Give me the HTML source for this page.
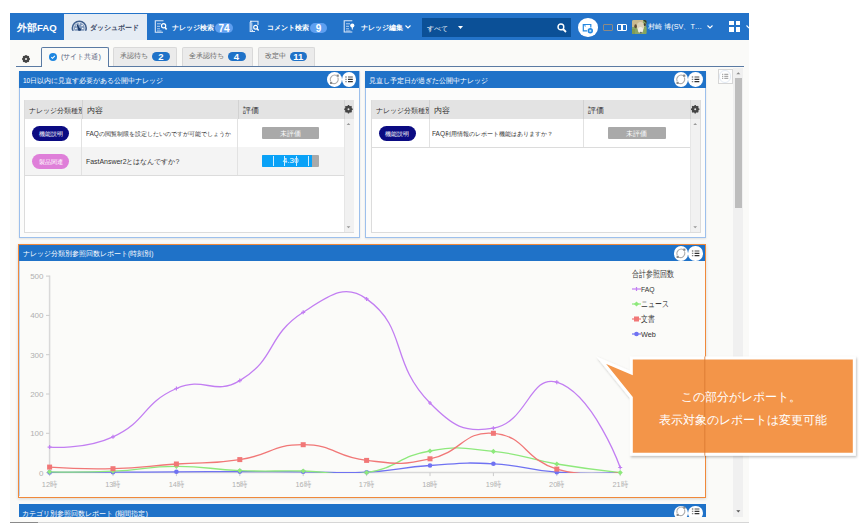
<!DOCTYPE html>
<html><head><meta charset="utf-8">
<style>
*{box-sizing:border-box}
html,body{margin:0;padding:0}
body{width:865px;height:529px;position:relative;overflow:hidden;background:#fff;font-family:"Liberation Sans",sans-serif;color:#333}
.a{position:absolute}
#app{left:10px;top:13px;width:739px;height:509.5px;background:#fafaf8;overflow:hidden}
#nav{left:10px;top:13px;width:739px;height:26.5px;background:#2373c9}
.nt{color:#fff;font-size:8.75px;font-weight:bold;white-space:nowrap;line-height:12px}
.badge{background:#5e9ff0;color:#fff;border-radius:6px;font-size:10px;font-weight:bold;text-align:center;line-height:11px}
.tab{border:1px solid #d9d9d9;border-bottom:none;background:#ebebeb;border-radius:2px 2px 0 0}
.tt{font-size:9px;color:#666;white-space:nowrap;line-height:11px}
.tb{background:#1f72c8;color:#fff;border-radius:5px;font-size:9.5px;font-weight:bold;text-align:center;line-height:9px}
.panel{border:1.5px solid #9dc0ec;background:#fcfcfb;box-shadow:0 1px 2px rgba(0,0,0,.1)}
.ph{background:#1f72c8;color:#fff;font-size:9.15px;line-height:18px;white-space:nowrap;padding-left:4px}
.circ{width:14.5px;height:14.8px;border-radius:50%;background:#fff}
.th{background:#e3e3e3;font-size:8px;color:#333;line-height:21px;white-space:nowrap;overflow:hidden}
.td{font-size:7.6px;color:#333;white-space:nowrap;overflow:hidden}
.pill{border-radius:8px;color:#fff;font-size:7.8px;text-align:center;line-height:15px}
.rbar{background:#a9a9a9;color:#fff;font-size:9px;text-align:center;line-height:12.5px}
</style></head><body>
<div id="app" class="a"></div>
<div id="nav" class="a"></div>
<!-- brand -->
<div class="a nt" style="left:17px;top:21px;font-size:10.5px;line-height:13px"><span class="f" style="--w:39.7px">外部FAQ</span></div>
<!-- active tab -->
<div class="a" style="left:64px;top:14px;width:82.5px;height:25.5px;background:#e5ecf4"></div>
<svg class="a" style="left:71px;top:20px" width="17" height="12" viewBox="0 0 17 12">
 <defs><clipPath id="gc"><rect x="0" y="0" width="17" height="10.7"/></clipPath></defs>
 <g clip-path="url(#gc)">
 <circle cx="8.3" cy="8.1" r="6.9" fill="none" stroke="#3f5f8e" stroke-width="1.6"/>
 <circle cx="8.3" cy="8.1" r="5.4" fill="#7f98bb"/>
 <path d="M4.2,8.6 L5.6,8.3 M4.9,5 L6.1,5.9 M8.3,3.2 V4.6 M11.7,5 L10.5,5.9 M12.4,8.6 L11,8.3" stroke="#fff" stroke-width="1.2"/>
 <path d="M8.6,10 L6.2,4.8" stroke="#1b3a6b" stroke-width="1.5"/>
 <circle cx="8.5" cy="9.6" r="1.5" fill="#1b3a6b"/>
 </g>
</svg>
<div class="a nt" style="left:90px;top:21px;color:#3d4a66"><span class="f" style="--w:48.5px">ダッシュボード</span></div>
<!-- knowledge search -->
<svg class="a" style="left:154px;top:19.5px" width="14" height="13" viewBox="0 0 14 13">
 <path d="M9.5,.8 H1.3 V12.2 H9" fill="none" stroke="#dbe8f8" stroke-width="1.1"/>
 <path d="M3,3.8 h4 M3,6.3 h3 M3,8.8 h3 M3,11 h4.5" stroke="#b6d0f0" stroke-width="1"/>
 <circle cx="9.6" cy="5.7" r="2.1" fill="none" stroke="#fff" stroke-width="1.2"/>
 <path d="M11,7.3 L12.6,9.4" stroke="#fff" stroke-width="1.6"/>
</svg>
<div class="a nt" style="left:172px;top:21px"><span class="f" style="--w:41.4px">ナレッジ検索</span></div>
<div class="a badge" style="left:215px;top:22.5px;width:18px;height:10.5px">74</div>
<!-- comment search -->
<svg class="a" style="left:249px;top:19.5px" width="12" height="13" viewBox="0 0 12 13">
 <path d="M3,1.2 H9 V5 M1.2,2 V11.5 H6" fill="none" stroke="#dbe8f8" stroke-width="1.1"/>
 <path d="M2.8,2.6 V10.5 H4" fill="none" stroke="#dbe8f8" stroke-width="1"/>
 <circle cx="2" cy="1.5" r=".9" fill="#fff"/>
 <circle cx="6.6" cy="7.2" r="1.9" fill="none" stroke="#fff" stroke-width="1.2"/>
 <path d="M8,8.6 L9.6,10.4" stroke="#fff" stroke-width="1.5"/>
</svg>
<div class="a nt" style="left:266.5px;top:21px"><span class="f" style="--w:41.2px">コメント検索</span></div>
<div class="a badge" style="left:310px;top:22.5px;width:17px;height:10.5px">9</div>
<!-- knowledge edit -->
<svg class="a" style="left:343px;top:19.5px" width="14" height="13" viewBox="0 0 14 13">
 <path d="M9.3,.8 H1.2 V12 H9.3" fill="none" stroke="#dbe8f8" stroke-width="1.1"/>
 <path d="M3,3.8 h4 M3,6.3 h3 M3,8.8 h3 M3,11 h4.5" stroke="#b6d0f0" stroke-width="1"/>
 <circle cx="9.3" cy="5.6" r="2.1" fill="#fff"/>
 <path d="M9.3,6.5 V9.5" stroke="#fff" stroke-width="1"/>
</svg>
<div class="a nt" style="left:360.5px;top:21px"><span class="f" style="--w:41.6px">ナレッジ編集</span></div>
<svg class="a" style="left:405px;top:25px" width="6" height="4" viewBox="0 0 6 4"><path d="M.5,.5 L3,3 L5.5,.5" fill="none" stroke="#fff" stroke-width="1.1"/></svg>
<!-- search box -->
<div class="a" style="left:422px;top:18px;width:149px;height:19px;background:#0b5097"></div>
<div class="a nt" style="left:427px;top:22px;font-weight:normal;font-size:8.75px"><span class="f" style="--w:19.8px">すべて</span></div>
<svg class="a" style="left:458px;top:26px" width="5" height="3" viewBox="0 0 5 3"><path d="M0,0 H5 L2.5,3Z" fill="#fff"/></svg>
<svg class="a" style="left:557px;top:22.5px" width="10" height="10" viewBox="0 0 10 10">
 <circle cx="3.9" cy="3.9" r="2.9" fill="none" stroke="#fff" stroke-width="1.4"/>
 <path d="M6,6 L9,9" stroke="#fff" stroke-width="1.8"/>
</svg>
<!-- round button -->
<div class="a" style="left:578px;top:18px;width:19.5px;height:18.5px;border-radius:50%;background:#fff"></div>
<svg class="a" style="left:582px;top:22.5px" width="12" height="11" viewBox="0 0 12 11">
 <path d="M5,7.8 H1.3 V1.5 H8.8 V4.5" fill="none" stroke="#2388e2" stroke-width="1.2"/>
 <path d="M2.3,2.6 h1 v1" fill="none" stroke="#2388e2" stroke-width=".8"/>
 <circle cx="8.3" cy="7.8" r="2.7" fill="#2388e2"/><rect x="7.3" y="6.8" width="2" height="2" fill="#bfe0fb"/>
</svg>
<!-- window icons -->
<div class="a" style="left:603px;top:24px;width:9.7px;height:7px;border:1.2px solid #8e8a82;border-radius:1px"></div>
<div class="a" style="left:617px;top:24px;width:10.2px;height:7px;border:1.4px solid #fff;border-radius:1px"></div>
<div class="a" style="left:621.4px;top:24px;width:1.4px;height:7px;background:#fff"></div>
<!-- avatar -->
<svg class="a" style="left:632.4px;top:19.7px" width="14.5" height="14.3" viewBox="0 0 14.5 14.3">
 <defs><clipPath id="av"><rect width="14.5" height="14.3" rx="1.6"/></clipPath><filter id="bl"><feGaussianBlur stdDeviation=".5"/></filter></defs>
 <g clip-path="url(#av)"><rect width="14.5" height="14.3" fill="#8aa566"/>
 <g filter="url(#bl)">
 <rect x="-1" y="-1" width="12" height="8" fill="#c9b98f"/>
 <path d="M10,-1 H16 V5 Z" fill="#2e3b2a"/>
 <ellipse cx="8.5" cy="6.5" rx="3.8" ry="4.5" fill="#ddd3b8"/>
 <ellipse cx="8.5" cy="10" rx="2.6" ry="3" fill="#f1eee6"/>
 <ellipse cx="3.6" cy="6.2" rx="1.3" ry="2" fill="#5d4c36"/>
 <ellipse cx="12.8" cy="4.5" rx="1" ry="1.6" fill="#4a3f33"/>
 <ellipse cx="8.8" cy="12.6" rx="1.2" ry=".8" fill="#6b6b66"/>
 <rect x="-1" y="9" width="4" height="6" fill="#7f9c52"/>
 <rect x="12" y="7" width="4" height="8" fill="#86a65a"/>
 </g></g>
</svg>
<div class="a nt" style="left:648.3px;top:21px;font-weight:normal;font-size:7.6px"><span class="f" style="--w:53.7px">村崎 博(SV、T…</span></div>
<svg class="a" style="left:707px;top:25px" width="6" height="4" viewBox="0 0 6 4"><path d="M.5,.5 L3,3 L5.5,.5" fill="none" stroke="#fff" stroke-width="1.1"/></svg>
<!-- grid -->
<div class="a" style="left:729px;top:20.7px;width:4.5px;height:4.5px;background:#fff"></div>
<div class="a" style="left:735.7px;top:20.7px;width:4.5px;height:4.5px;background:#fff"></div>
<div class="a" style="left:729px;top:27.2px;width:4.5px;height:4.5px;background:#fff"></div>
<div class="a" style="left:735.7px;top:27.2px;width:4.5px;height:4.5px;background:#fff"></div>
<svg class="a" style="left:746px;top:25px" width="3" height="4" viewBox="0 0 3 4"><path d="M.5,.5 L3,3" fill="none" stroke="#fff" stroke-width="1.1"/></svg>

<!-- tabs row -->
<svg class="a" style="left:21.5px;top:54.5px" width="8" height="8" viewBox="0 0 8 8">
 <circle cx="4" cy="4" r="2.6" fill="none" stroke="#444" stroke-width="1.6"/>
 <path d="M4,0 V8 M0,4 H8 M1.2,1.2 L6.8,6.8 M6.8,1.2 L1.2,6.8" stroke="#444" stroke-width="1.3"/>
 <circle cx="4" cy="4" r="1" fill="#fafaf8"/>
</svg>
<div class="a" style="left:16px;top:66px;width:727.5px;height:1.3px;background:#5a7aa3"></div>
<div class="a" style="left:41px;top:47px;width:68px;height:20.3px;border:1.2px solid #5a7aa3;border-bottom:none;background:#fafaf8;border-radius:2px 2px 0 0"></div>
<div class="a" style="left:49px;top:52.5px;width:8px;height:8px;border-radius:50%;background:#1d86e0"></div>
<svg class="a" style="left:49px;top:52.5px" width="8" height="8" viewBox="0 0 8 8"><path d="M2.3,4.2 L3.5,5.3 L5.8,2.8" fill="none" stroke="#fff" stroke-width="1.1"/></svg>
<div class="a tt" style="left:61px;top:51px;color:#5d6985"><span class="f" style="--w:40.9px">(サイト共通)</span></div>

<div class="a tab" style="left:113px;top:47px;width:64px;height:19px"></div>
<div class="a tt" style="left:120px;top:50px"><span class="f" style="--w:27.7px">承認待ち</span></div>
<div class="a tb" style="left:152px;top:51.5px;width:18px;height:9px">2</div>
<div class="a tab" style="left:182px;top:47px;width:71px;height:19px"></div>
<div class="a tt" style="left:189px;top:50px"><span class="f" style="--w:34.5px">全承認待ち</span></div>
<div class="a tb" style="left:227.5px;top:51.5px;width:18px;height:9px">4</div>
<div class="a tab" style="left:258px;top:47px;width:57px;height:19px"></div>
<div class="a tt" style="left:265px;top:50px"><span class="f" style="--w:20.5px">改定中</span></div>
<div class="a tb" style="left:289.5px;top:51.5px;width:17.5px;height:9px">11</div>

<!-- panel 1 -->
<div class="a panel" style="left:18.5px;top:71px;width:341.5px;height:167px"></div>
<div class="a ph" style="left:19px;top:71px;width:340px;height:16.8px"><span class="f" style="--w:139.6px">10日以内に見直す必要がある公開中ナレッジ</span></div>
<div class="a circ" style="left:327px;top:71.9px"></div>
<div class="a circ" style="left:341.7px;top:71.9px"></div>

<!-- table 1 -->
<div class="a" style="left:24px;top:100px;width:330px;height:132.5px;border:1px solid #dcdcdc;background:#fff"></div>
<div class="a th" style="left:25px;top:100.2px;width:57px;height:18.5px;padding-left:4px"><span class="f" style="--w:52px">ナレッジ分類種別</span></div>
<div class="a th" style="left:82px;top:100.2px;width:156px;height:18.5px;padding-left:4px;border-left:1px solid #d2d2d2">内容</div>
<div class="a th" style="left:237.5px;top:100.2px;width:106px;height:18.5px;padding-left:4px;border-left:1px solid #d2d2d2">評価</div>
<div class="a th" style="left:343.5px;top:100.2px;width:10px;height:18.5px;border-left:1px solid #d2d2d2"></div>
<div class="a" style="left:25px;top:146.8px;width:318.5px;height:28.5px;background:#f4f4f4"></div>
<div class="a" style="left:25px;top:175px;width:318.5px;height:1px;background:#dcdcdc"></div>
<div class="a" style="left:81px;top:118.7px;width:1px;height:56.5px;background:#e2e2e2"></div>
<div class="a" style="left:237px;top:118.7px;width:1px;height:56.5px;background:#e2e2e2"></div>
<div class="a" style="left:343.5px;top:118.7px;width:10px;height:113px;background:#f1f1f1;border-left:1px solid #e6e6e6"></div>
<div class="a pill" style="left:32.2px;top:125.5px;width:37px;height:15.2px;background:#0b0b82"><span class="f" style="--w:25px">機能説明</span></div>
<div class="a pill" style="left:32.2px;top:153.8px;width:37px;height:15px;background:#df7fd9"><span class="f" style="--w:25px">製品関連</span></div>
<div class="a td" style="left:86px;top:129px;width:151px"><span class="f" style="--w:151px">FAQの閲覧制限を設定したいのですが可能でしょうか</span></div>
<div class="a td" style="left:86px;top:157px;width:150px"><span class="f" style="--w:93.3px">FastAnswer2とはなんですか?</span></div>
<div class="a rbar" style="left:261.6px;top:126.7px;width:57.7px;height:12.3px;border-radius:1px"><span class="f" style="--w:21.8px">未評価</span></div>
<div class="a" style="left:261.6px;top:154.6px;width:57.7px;height:12.5px;background:#a9a9a9;border-radius:1px"></div>
<div class="a rbar" style="left:261.6px;top:154.6px;width:50px;height:12.5px;background:#0aa2f7;border-radius:1px 0 0 1px;padding-left:8px;font-size:8px">4.30</div>
<div class="a" style="left:272.5px;top:156px;width:1px;height:9.5px;background:#cfeeff"></div>
<div class="a" style="left:284px;top:156px;width:1px;height:9.5px;background:#cfeeff"></div>
<div class="a" style="left:296px;top:156px;width:1px;height:9.5px;background:#cfeeff"></div>
<div class="a" style="left:307.5px;top:156px;width:1px;height:9.5px;background:#cfeeff"></div>


<!-- panel 2 -->
<div class="a panel" style="left:364.5px;top:71px;width:341.5px;height:167px"></div>
<div class="a ph" style="left:365px;top:71px;width:340.5px;height:16.8px"><span class="f" style="--w:117.3px">見直し予定日が過ぎた公開中ナレッジ</span></div>
<div class="a circ" style="left:673.5px;top:71.9px"></div>
<div class="a circ" style="left:688.2px;top:71.9px"></div>
<div class="a" style="left:370.5px;top:100px;width:330.5px;height:132.5px;border:1px solid #dcdcdc;background:#fff"></div>
<div class="a th" style="left:371.5px;top:100.2px;width:57.5px;height:18.5px;padding-left:4px"><span class="f" style="--w:52px">ナレッジ分類種別</span></div>
<div class="a th" style="left:429px;top:100.2px;width:155px;height:18.5px;padding-left:4px;border-left:1px solid #d2d2d2">内容</div>
<div class="a th" style="left:583.2px;top:100.2px;width:107px;height:18.5px;padding-left:4px;border-left:1px solid #d2d2d2">評価</div>
<div class="a th" style="left:690.2px;top:100.2px;width:10px;height:18.5px;border-left:1px solid #d2d2d2"></div>
<div class="a" style="left:371.5px;top:147px;width:319px;height:1px;background:#dcdcdc"></div>
<div class="a" style="left:428.5px;top:118.7px;width:1px;height:28.3px;background:#e2e2e2"></div>
<div class="a" style="left:583px;top:118.7px;width:1px;height:28.3px;background:#e2e2e2"></div>
<div class="a" style="left:690.2px;top:118.7px;width:10px;height:113px;background:#f1f1f1;border-left:1px solid #e6e6e6"></div>
<div class="a pill" style="left:379px;top:125.5px;width:36.5px;height:15.2px;background:#0b0b82"><span class="f" style="--w:25px">機能説明</span></div>
<div class="a td" style="left:432px;top:129px;width:150px"><span class="f" style="--w:126.4px">FAQ利用情報のレポート機能はありますか？</span></div>
<div class="a rbar" style="left:608px;top:126.7px;width:57.7px;height:12.3px;border-radius:1px"><span class="f" style="--w:21.8px">未評価</span></div>

<!-- right side -->
<div class="a" style="left:717.8px;top:69.1px;width:14.8px;height:14.6px;border:1px solid #d6d6d6;background:#fdfdfd"></div>
<div class="a" style="left:719px;top:70.2px;width:12.4px;height:12.4px;border-radius:50%;border:1px solid #e3ebf5;background:#fff"></div>
<svg class="a" style="left:0;top:0" width="865" height="100">
 <path d="M722.2,74.4 h1 M722.2,76.4 h1 M722.2,78.4 h1" stroke="#999" stroke-width="1.1"/>
 <path d="M724.3,74.4 h4 M724.3,76.4 h4 M724.3,78.4 h4" stroke="#aaa" stroke-width="1.1"/>
</svg>
<div class="a" style="left:733.2px;top:68px;width:9.8px;height:448.5px;background:#f0f0f0"></div>
<div class="a" style="left:734.8px;top:77.9px;width:7.2px;height:130.2px;background:#bdbdbd"></div>
<svg class="a" style="left:0;top:0" width="865" height="529">
 <path d="M736.3,74.2 L738.3,72.2 L740.3,74.2Z" fill="#888"/>
 <path d="M736.3,510.3 L738.3,512.5 L740.3,510.3Z" fill="#555"/>
</svg>

<!-- chart panel -->
<div class="a" style="left:18px;top:244px;width:688px;height:253.5px;background:#fbfbf9;box-shadow:0 1px 3px rgba(0,0,0,.15)"></div>
<div class="a" style="left:19.4px;top:261px;width:1px;height:235px;background:#b9d3f1"></div>
<div class="a ph" style="left:19px;top:245px;width:686px;height:15.8px;line-height:17px"><span class="f" style="--w:130.4px">ナレッジ分類別参照回数レポート(時刻別)</span></div>
<div class="a circ" style="left:673.5px;top:246px;width:14.5px;height:14.5px"></div>
<div class="a circ" style="left:688px;top:246px;width:14.5px;height:14.5px"></div>
<div class="a" style="left:18px;top:244px;width:688px;height:253.5px;border:1.5px solid #f0893b"></div>
<svg class="a" style="left:0;top:0" width="865" height="529">
<path d="M49.6,275.5 V472.6 H620.5" fill="none" stroke="#d9d9d9" stroke-width="1.5"/><path d="M46,472.6 H49.6" stroke="#ccc" stroke-width="1"/><text x="43.5" y="475.6" text-anchor="end" font-size="8" fill="#b0b0b0">0</text><path d="M46,433.3 H49.6" stroke="#ccc" stroke-width="1"/><text x="43.5" y="436.3" text-anchor="end" font-size="8" fill="#b0b0b0">100</text><path d="M46,394.0 H49.6" stroke="#ccc" stroke-width="1"/><text x="43.5" y="397.0" text-anchor="end" font-size="8" fill="#b0b0b0">200</text><path d="M46,354.7 H49.6" stroke="#ccc" stroke-width="1"/><text x="43.5" y="357.7" text-anchor="end" font-size="8" fill="#b0b0b0">300</text><path d="M46,315.4 H49.6" stroke="#ccc" stroke-width="1"/><text x="43.5" y="318.4" text-anchor="end" font-size="8" fill="#b0b0b0">400</text><path d="M46,276.1 H49.6" stroke="#ccc" stroke-width="1"/><text x="43.5" y="279.1" text-anchor="end" font-size="8" fill="#b0b0b0">500</text><path d="M49.6,472.6 V476.1" stroke="#ccc" stroke-width="1"/><text x="49.6" y="486.6" text-anchor="middle" font-size="8" fill="#b0b0b0" textLength="15.5" lengthAdjust="spacingAndGlyphs">12時</text><path d="M113.0,472.6 V476.1" stroke="#ccc" stroke-width="1"/><text x="113.0" y="486.6" text-anchor="middle" font-size="8" fill="#b0b0b0" textLength="15.5" lengthAdjust="spacingAndGlyphs">13時</text><path d="M176.4,472.6 V476.1" stroke="#ccc" stroke-width="1"/><text x="176.4" y="486.6" text-anchor="middle" font-size="8" fill="#b0b0b0" textLength="15.5" lengthAdjust="spacingAndGlyphs">14時</text><path d="M239.8,472.6 V476.1" stroke="#ccc" stroke-width="1"/><text x="239.8" y="486.6" text-anchor="middle" font-size="8" fill="#b0b0b0" textLength="15.5" lengthAdjust="spacingAndGlyphs">15時</text><path d="M303.2,472.6 V476.1" stroke="#ccc" stroke-width="1"/><text x="303.2" y="486.6" text-anchor="middle" font-size="8" fill="#b0b0b0" textLength="15.5" lengthAdjust="spacingAndGlyphs">16時</text><path d="M366.6,472.6 V476.1" stroke="#ccc" stroke-width="1"/><text x="366.6" y="486.6" text-anchor="middle" font-size="8" fill="#b0b0b0" textLength="15.5" lengthAdjust="spacingAndGlyphs">17時</text><path d="M430.0,472.6 V476.1" stroke="#ccc" stroke-width="1"/><text x="430.0" y="486.6" text-anchor="middle" font-size="8" fill="#b0b0b0" textLength="15.5" lengthAdjust="spacingAndGlyphs">18時</text><path d="M493.4,472.6 V476.1" stroke="#ccc" stroke-width="1"/><text x="493.4" y="486.6" text-anchor="middle" font-size="8" fill="#b0b0b0" textLength="15.5" lengthAdjust="spacingAndGlyphs">19時</text><path d="M556.8,472.6 V476.1" stroke="#ccc" stroke-width="1"/><text x="556.8" y="486.6" text-anchor="middle" font-size="8" fill="#b0b0b0" textLength="15.5" lengthAdjust="spacingAndGlyphs">20時</text><path d="M620.2,472.6 V476.1" stroke="#ccc" stroke-width="1"/><text x="620.2" y="486.6" text-anchor="middle" font-size="8" fill="#b0b0b0" textLength="15.5" lengthAdjust="spacingAndGlyphs">21時</text><clipPath id="cp"><rect x="40" y="260" width="600" height="213.10000000000002"/></clipPath><g clip-path="url(#cp)" fill="none" stroke-width="1.3"><path d="M49.6,472.4 C49.6,472.4 81.3,472.4 113.0,472.2 C144.7,472.1 144.7,472.0 176.4,471.8 C208.1,471.7 208.1,471.6 239.8,471.6 C271.5,471.6 271.5,471.7 303.2,471.8 C334.9,472.0 335.0,473.8 366.6,472.2 C398.4,470.6 398.2,467.6 430.0,465.5 C461.6,463.4 461.8,462.1 493.4,463.8 C525.2,465.4 525.0,470.0 556.8,472.2 C588.4,474.4 620.2,472.6 620.2,472.6" stroke="#6f72f2"/><path d="M49.6,471.8 C49.6,471.8 81.3,472.6 113.0,471.2 C144.7,469.8 144.7,466.4 176.4,466.3 C208.1,466.2 208.1,469.5 239.8,470.6 C271.5,471.8 271.5,470.5 303.2,471.0 C334.9,471.5 335.8,477.5 366.6,472.6 C399.2,467.5 397.4,456.4 430.0,451.0 C460.8,445.8 462.0,448.2 493.4,451.4 C525.4,454.7 524.9,458.6 556.8,464.0 C588.3,469.2 620.2,472.6 620.2,472.6" stroke="#8ee97c"/><path d="M49.6,467.1 C49.6,467.1 81.3,469.5 113.0,468.7 C144.7,467.9 144.7,466.2 176.4,464.0 C208.1,461.7 208.5,464.4 239.8,459.6 C271.9,454.8 271.5,444.5 303.2,444.7 C334.9,444.9 334.4,456.8 366.6,460.4 C397.8,463.9 399.5,465.4 430.0,458.8 C462.9,451.8 462.7,430.8 493.4,433.3 C526.1,435.9 522.9,458.6 556.8,469.1 C586.3,478.2 620.2,472.6 620.2,472.6" stroke="#f17777"/><path d="M49.6,447.1 C49.6,447.1 84.7,449.9 113.0,436.8 C148.1,420.6 141.2,404.1 176.4,388.5 C204.6,376.0 214.0,396.1 239.8,380.6 C277.4,358.0 265.8,336.4 303.2,312.3 C329.2,295.5 344.6,283.1 366.6,298.9 C408.0,328.5 389.3,361.6 430.0,403.0 C452.7,426.2 463.9,433.0 493.4,428.2 C527.3,422.6 529.9,373.9 556.8,382.2 C593.3,393.5 620.2,467.5 620.2,467.5" stroke="#c27ef2"/></g><circle cx="49.6" cy="472.4" r="2.3" fill="#6f72f2"/><circle cx="113.0" cy="472.2" r="2.3" fill="#6f72f2"/><circle cx="176.4" cy="471.8" r="2.3" fill="#6f72f2"/><circle cx="239.8" cy="471.6" r="2.3" fill="#6f72f2"/><circle cx="303.2" cy="471.8" r="2.3" fill="#6f72f2"/><circle cx="366.6" cy="472.2" r="2.3" fill="#6f72f2"/><circle cx="430.0" cy="465.5" r="2.3" fill="#6f72f2"/><circle cx="493.4" cy="463.8" r="2.3" fill="#6f72f2"/><circle cx="556.8" cy="472.2" r="2.3" fill="#6f72f2"/><path d="M49.6,469.2 L52.2,471.8 L49.6,474.4 L47.0,471.8Z" fill="#8ee97c"/><path d="M113.0,468.6 L115.6,471.2 L113.0,473.8 L110.4,471.2Z" fill="#8ee97c"/><path d="M176.4,463.7 L179.0,466.3 L176.4,468.9 L173.8,466.3Z" fill="#8ee97c"/><path d="M239.8,468.0 L242.4,470.6 L239.8,473.2 L237.2,470.6Z" fill="#8ee97c"/><path d="M303.2,468.4 L305.8,471.0 L303.2,473.6 L300.6,471.0Z" fill="#8ee97c"/><path d="M366.6,470.0 L369.2,472.6 L366.6,475.2 L364.0,472.6Z" fill="#8ee97c"/><path d="M430.0,448.4 L432.6,451.0 L430.0,453.6 L427.4,451.0Z" fill="#8ee97c"/><path d="M493.4,448.8 L496.0,451.4 L493.4,454.0 L490.8,451.4Z" fill="#8ee97c"/><path d="M556.8,461.4 L559.4,464.0 L556.8,466.6 L554.2,464.0Z" fill="#8ee97c"/><path d="M620.2,470.0 L622.8,472.6 L620.2,475.2 L617.6,472.6Z" fill="#8ee97c"/><rect x="47.1" y="464.6" width="5" height="5" fill="#f17777"/><rect x="110.5" y="466.2" width="5" height="5" fill="#f17777"/><rect x="173.9" y="461.5" width="5" height="5" fill="#f17777"/><rect x="237.3" y="457.1" width="5" height="5" fill="#f17777"/><rect x="300.7" y="442.2" width="5" height="5" fill="#f17777"/><rect x="364.1" y="457.9" width="5" height="5" fill="#f17777"/><rect x="427.5" y="456.3" width="5" height="5" fill="#f17777"/><rect x="490.9" y="430.8" width="5" height="5" fill="#f17777"/><rect x="554.3" y="466.6" width="5" height="5" fill="#f17777"/><path d="M47.6,447.1 H51.6 M49.6,445.1 V449.1" stroke="#c27ef2" stroke-width="1.2"/><path d="M111.0,436.8 H115.0 M113.0,434.8 V438.8" stroke="#c27ef2" stroke-width="1.2"/><path d="M174.4,388.5 H178.4 M176.4,386.5 V390.5" stroke="#c27ef2" stroke-width="1.2"/><path d="M237.8,380.6 H241.8 M239.8,378.6 V382.6" stroke="#c27ef2" stroke-width="1.2"/><path d="M301.2,312.3 H305.2 M303.2,310.3 V314.3" stroke="#c27ef2" stroke-width="1.2"/><path d="M364.6,298.9 H368.6 M366.6,296.9 V300.9" stroke="#c27ef2" stroke-width="1.2"/><path d="M428.0,403.0 H432.0 M430.0,401.0 V405.0" stroke="#c27ef2" stroke-width="1.2"/><path d="M491.4,428.2 H495.4 M493.4,426.2 V430.2" stroke="#c27ef2" stroke-width="1.2"/><path d="M554.8,382.2 H558.8 M556.8,380.2 V384.2" stroke="#c27ef2" stroke-width="1.2"/><path d="M618.2,467.5 H622.2 M620.2,465.5 V469.5" stroke="#c27ef2" stroke-width="1.2"/><text x="632" y="276.5" font-size="8.75" fill="#333" textLength="41.7" lengthAdjust="spacingAndGlyphs">合計参照回数</text><path d="M632,289 H641" stroke="#c27ef2" stroke-width="1.2"/><path d="M636.5,287 V291" stroke="#c27ef2" stroke-width="1.2"/><text x="641" y="292" font-size="7.5" fill="#333" textLength="13.6" lengthAdjust="spacingAndGlyphs">FAQ</text><path d="M632,304 H641" stroke="#8ee97c" stroke-width="1.2"/><path d="M636.5,301.4 L639.1,304 L636.5,306.6 L633.9,304Z" fill="#8ee97c"/><text x="641" y="307" font-size="8.75" fill="#333" textLength="27.5" lengthAdjust="spacingAndGlyphs">ニュース</text><path d="M632,319 H641" stroke="#f17777" stroke-width="1.2"/><rect x="634.0" y="316.5" width="5" height="5" fill="#f17777"/><text x="641" y="322" font-size="8.75" fill="#333" textLength="13.5" lengthAdjust="spacingAndGlyphs">文書</text><path d="M632,334 H641" stroke="#6f72f2" stroke-width="1.2"/><circle cx="636.5" cy="334" r="2.3" fill="#6f72f2"/><text x="641" y="337" font-size="7.5" fill="#333" textLength="14.8" lengthAdjust="spacingAndGlyphs">Web</text>
</svg>



<!-- bottom panel -->
<div class="a" style="left:19px;top:504px;width:687px;height:12.6px;background:#1f72c8;overflow:hidden">
 <div class="a" style="left:3px;top:2px;color:#fff;font-size:9.15px;line-height:14px;white-space:nowrap"><span class="f" style="--w:126.4px">カテゴリ別参照回数レポート (期間指定)</span></div>
 <div class="a circ" style="left:654.5px;top:1.5px;width:14.5px;height:14.5px"></div>
 <div class="a circ" style="left:669px;top:1.5px;width:14.5px;height:14.5px"></div>
</div>
<div class="a" style="left:10px;top:521.8px;width:739px;height:1px;background:#d6d6d6"></div>
<div class="a" style="left:10px;top:521.6px;width:28px;height:1.4px;background:#8a8a8a"></div>

<svg class="a" style="left:0;top:0" width="865" height="529">
 <g><path d="M330.7,81.2 A4.4,4.4 0 0 1 336.5,75.4" fill="none" stroke="#adadad" stroke-width="1.05"/>
 <path d="M337.8,77.4 A4.4,4.4 0 0 1 332,83.2" fill="none" stroke="#adadad" stroke-width="1.05"/>
 <rect x="336.6" y="74.6" width="2.2" height="2.2" fill="#888"/><rect x="330" y="81.8" width="2.2" height="2.2" fill="#888"/></g>
 <g><path d="M345.3,77 h1.4 M345.3,79.3 h1.4 M345.3,81.7 h1.4" stroke="#888" stroke-width="1.3"/>
 <path d="M348,77 h4.8" stroke="#777" stroke-width="1.3"/><path d="M348,79.3 h4.8 M348,81.7 h4.8" stroke="#333" stroke-width="1.3"/></g>
 <g transform="translate(346.5,0)"><path d="M330.7,81.2 A4.4,4.4 0 0 1 336.5,75.4" fill="none" stroke="#adadad" stroke-width="1.05"/>
 <path d="M337.8,77.4 A4.4,4.4 0 0 1 332,83.2" fill="none" stroke="#adadad" stroke-width="1.05"/>
 <rect x="336.6" y="74.6" width="2.2" height="2.2" fill="#888"/><rect x="330" y="81.8" width="2.2" height="2.2" fill="#888"/></g><g transform="translate(346.5,0)"><path d="M345.3,77 h1.4 M345.3,79.3 h1.4 M345.3,81.7 h1.4" stroke="#888" stroke-width="1.3"/>
 <path d="M348,77 h4.8" stroke="#777" stroke-width="1.3"/><path d="M348,79.3 h4.8 M348,81.7 h4.8" stroke="#333" stroke-width="1.3"/></g>
 <g transform="translate(346.6,174)"><path d="M330.7,81.2 A4.4,4.4 0 0 1 336.5,75.4" fill="none" stroke="#adadad" stroke-width="1.05"/>
 <path d="M337.8,77.4 A4.4,4.4 0 0 1 332,83.2" fill="none" stroke="#adadad" stroke-width="1.05"/>
 <rect x="336.6" y="74.6" width="2.2" height="2.2" fill="#888"/><rect x="330" y="81.8" width="2.2" height="2.2" fill="#888"/></g><g transform="translate(346.6,174)"><path d="M345.3,77 h1.4 M345.3,79.3 h1.4 M345.3,81.7 h1.4" stroke="#888" stroke-width="1.3"/>
 <path d="M348,77 h4.8" stroke="#777" stroke-width="1.3"/><path d="M348,79.3 h4.8 M348,81.7 h4.8" stroke="#333" stroke-width="1.3"/></g>
 <g transform="translate(346.6,432)"><path d="M330.7,81.2 A4.4,4.4 0 0 1 336.5,75.4" fill="none" stroke="#adadad" stroke-width="1.05"/>
 <path d="M337.8,77.4 A4.4,4.4 0 0 1 332,83.2" fill="none" stroke="#adadad" stroke-width="1.05"/>
 <rect x="336.6" y="74.6" width="2.2" height="2.2" fill="#888"/><rect x="330" y="81.8" width="2.2" height="2.2" fill="#888"/></g><g transform="translate(346.6,432)"><path d="M345.3,77 h1.4 M345.3,79.3 h1.4 M345.3,81.7 h1.4" stroke="#888" stroke-width="1.3"/>
 <path d="M348,77 h4.8" stroke="#777" stroke-width="1.3"/><path d="M348,79.3 h4.8 M348,81.7 h4.8" stroke="#333" stroke-width="1.3"/></g>
 <g><circle cx="348.5" cy="109.2" r="2.7" fill="none" stroke="#444" stroke-width="1.7"/>
 <path d="M348.5,105 V113.4 M344.3,109.2 H352.7 M345.5,106.2 L351.5,112.2 M351.5,106.2 L345.5,112.2" stroke="#444" stroke-width="1.4"/>
 <circle cx="348.5" cy="109.2" r="1" fill="#e3e3e3"/></g>
 <path d="M346.6,125 L348.5,123 L350.4,125Z" fill="#999"/>
 <path d="M346.6,226.2 L348.5,228.2 L350.4,226.2Z" fill="#999"/>
 <g transform="translate(346.7,0)"><circle cx="348.5" cy="109.2" r="2.7" fill="none" stroke="#444" stroke-width="1.7"/>
 <path d="M348.5,105 V113.4 M344.3,109.2 H352.7 M345.5,106.2 L351.5,112.2 M351.5,106.2 L345.5,112.2" stroke="#444" stroke-width="1.4"/>
 <circle cx="348.5" cy="109.2" r="1" fill="#e3e3e3"/></g>
 <path d="M693.3,125 L695.2,123 L697.1,125Z" fill="#999"/>
 <path d="M693.3,226.2 L695.2,228.2 L697.1,226.2Z" fill="#999"/>
</svg>
<!-- callout -->
<svg class="a" style="left:0;top:0" width="865" height="529">
 <defs><filter id="sh" x="-10%" y="-10%" width="130%" height="130%"><feDropShadow dx="1" dy="1.5" stdDeviation="1.2" flood-color="#000" flood-opacity=".25"/></filter></defs>
 <path d="M631.3,357.9 H854.3 V454.2 H631.3 V397.5 L601,360 L631.3,373 Z" fill="#f39548" stroke="#fff" stroke-width="3" stroke-miterlimit="10" filter="url(#sh)"/>
 <path d="M704.8,356.5 V455.7" stroke="#d7772f" stroke-width="1" opacity=".8"/>
</svg>
<div class="a" style="left:631.3px;top:384.5px;width:223px;text-align:center;color:#fff;font-size:14.4px;line-height:22px;white-space:nowrap"><span class="f" style="--w:115.5px;margin-right:3px">この部分がレポート。</span><br><span class="f" style="--w:169.6px">表示対象のレポートは変更可能</span></div>
<script>
(function(){
 var els=document.querySelectorAll('.f');
 for(var k=0;k<els.length;k++){
  var el=els[k]; var w=parseFloat(el.style.getPropertyValue('--w'));
  if(!w) continue;
  var r=document.createRange(); r.selectNodeContents(el);
  var fs0=parseFloat(getComputedStyle(el).fontSize);
  var c0=r.getBoundingClientRect().width; if(!c0) continue;
  var est=fs0*w/c0, best=fs0, bd=Math.abs(c0-w);
  var cands=[est];
  for(var i=-8;i<=8;i++) cands.push(est*(1+i*0.025));
  for(var j=0;j<cands.length;j++){
   var f=Math.max(5,Math.min(16,cands[j]));
   el.style.fontSize=f+'px';
   var cw=r.getBoundingClientRect().width;
   var d=Math.abs(cw-w)+0.02*Math.abs(f-est);
   if(d<bd){bd=d;best=f;}
  }
  el.style.fontSize=best+'px';
 }
})();
</script>
</body></html>
